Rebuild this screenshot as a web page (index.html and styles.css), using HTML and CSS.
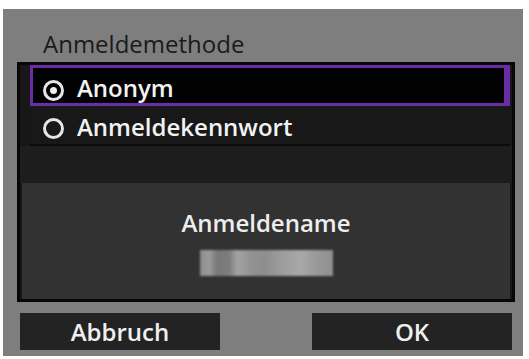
FILE: index.html
```html
<!DOCTYPE html>
<html lang="de">
<head>
<meta charset="utf-8">
<title>Anmeldemethode</title>
<link rel="stylesheet" href="styles.css">
</head>
<body>
<div class="screen">
  <div class="title">Anmeldemethode</div>
  <div class="box">
    <div class="row row-selected">
      <span class="radio radio-on"></span>
      <span class="label">Anonym</span>
    </div>
    <div class="row row-plain">
      <span class="radio"></span>
      <span class="label">Anmeldekennwort</span>
    </div>
    <div class="spacer"></div>
    <div class="info">
      <div class="info-label">Anmeldename</div>
      <div class="masked"></div>
    </div>
  </div>
  <div class="buttons">
    <div class="btn">Abbruch</div>
    <div class="btn">OK</div>
  </div>
</div>
</body>
</html>
```
FILE: styles.css
```css
html, body {
  margin: 0;
  padding: 0;
  background: #ffffff;
}
body {
  width: 529px;
  height: 359px;
  overflow: hidden;
  font-family: "Open Sans", "Noto Sans", sans-serif;
}
.screen {
  box-sizing: border-box;
  margin: 9px 0 0 3px;
  width: 520px;
  height: 347px;
  background: #7e7e7e;
  padding: 0 8px 0 14px;
  display: flex;
  flex-direction: column;
}
.title {
  height: 53px;
  box-sizing: border-box;
  padding: 18px 0 0 26px;
  font-size: 24px;
  font-weight: 500;
  line-height: 34px;
  color: #1a1a1a;
}
.box {
  box-sizing: border-box;
  width: 498px;
  height: 240px;
  border: 3px solid #070707;
  background: #171717;
  display: flex;
  flex-direction: column;
}
.row {
  display: flex;
  align-items: flex-start;
  box-sizing: border-box;
  color: #f2f2f2;
  font-size: 24px;
  font-weight: 600;
  line-height: 34px;
}
.row-selected {
  height: 41px;
  margin: 0 2px 0 10px;
  border: 3px solid #6a2da6;
  border-right-width: 6px;
  background: #020202;
  padding-left: 10px;
}
.row-selected .radio { margin-top: 12px; }
.row-selected .label { padding-top: 3px; }
.row-plain {
  height: 40px;
  margin: 0 2px 0 10px;
  padding-left: 13px;
  border-bottom: 2px solid #0b0b0b;
  background: #181818;
}
.row-plain .radio { margin-top: 12px; }
.row-plain .label { padding-top: 4px; }
.radio {
  box-sizing: border-box;
  width: 21px;
  height: 21px;
  border: 3px solid #e6e6e6;
  border-radius: 50%;
  margin-right: 13px;
  display: flex;
  align-items: center;
  justify-content: center;
  flex: none;
}
.radio-on::after {
  content: "";
  width: 7px;
  height: 7px;
  border-radius: 50%;
  background: #ededed;
}
.spacer {
  height: 37px;
  background: #1d1d1d;
}
.info {
  flex: 1;
  margin: 0 2px;
  background: #323232;
  display: flex;
  flex-direction: column;
  align-items: center;
  padding-top: 23px;
}
.info-label {
  font-size: 24px;
  font-weight: 600;
  line-height: 34px;
  color: #eeeeee;
}
.masked {
  margin-top: 10px;
  width: 133px;
  height: 26px;
  background: linear-gradient(90deg, #8c8c8c 0%, #9b9b9b 7%, #777777 13%, #7e7e7e 22%, #a3a3a3 28%, #939393 38%, #8e8e8e 48%, #9d9d9d 62%, #a9a9a9 76%, #999999 88%, #8f8f8f 100%);
  filter: blur(1px);
}
.buttons {
  display: flex;
  justify-content: space-between;
  margin-top: 11px;
  padding: 0 3px 0 3px;
}
.btn {
  width: 200px;
  height: 37px;
  background: #232323;
  color: #f0f0f0;
  font-size: 24px;
  font-weight: 600;
  display: flex;
  align-items: center;
  justify-content: center;
}
```
